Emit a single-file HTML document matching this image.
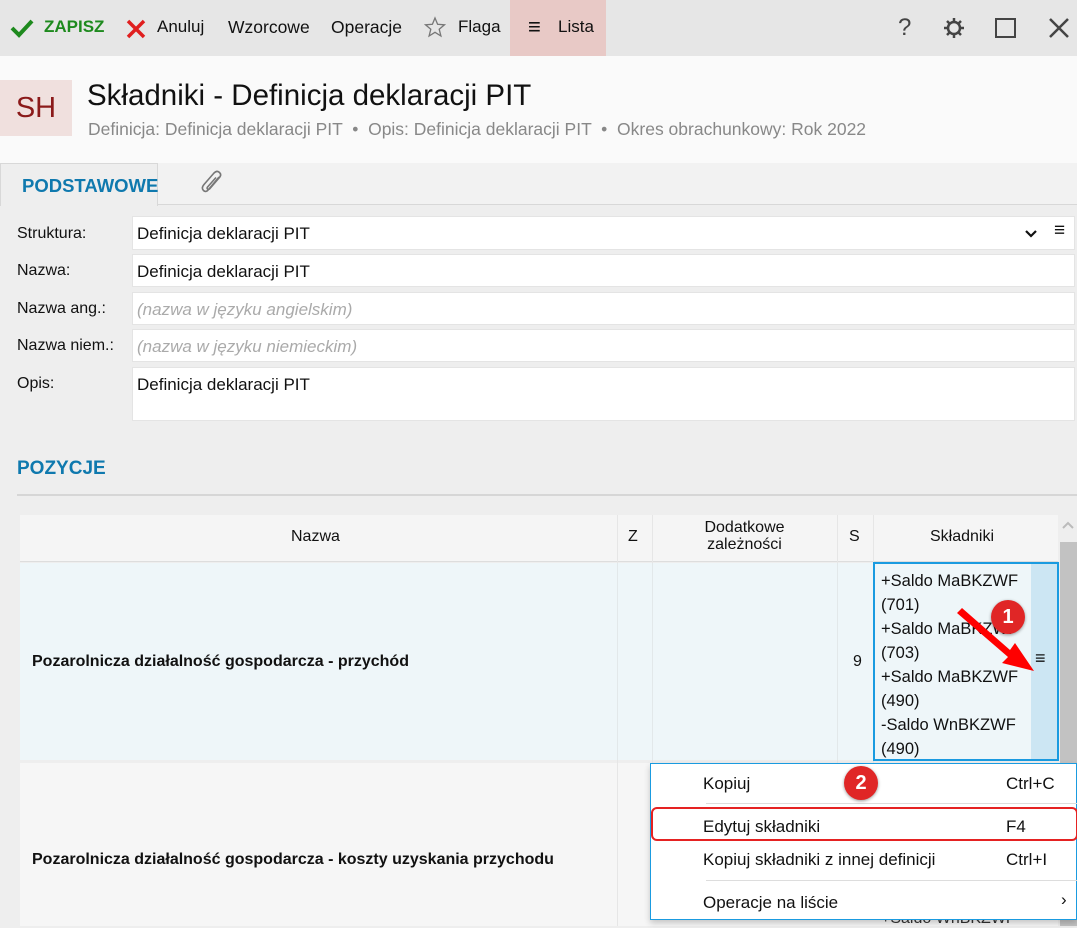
<!DOCTYPE html>
<html><head><meta charset="utf-8"><style>
*{box-sizing:border-box;margin:0;padding:0}
body{width:1077px;height:926px;overflow:hidden;background:#eeeeee;font-family:"Liberation Sans",sans-serif;color:#111;position:relative}
.a{position:absolute;white-space:nowrap}
.tb{left:0;top:0;width:1077px;height:56px;background:#e6e6e6}
.tt{font-size:17px;top:17px}
.inp{position:absolute;left:132px;width:943px;background:#fff;border:1px solid #e4e4e4;font-size:17px;padding:7px 0 0 4px}
.lbl{position:absolute;left:17px;font-size:16px}
.ph{color:#aaa;font-style:italic}
.menu .a{font-size:17px}
.bd{position:absolute;width:34px;height:34px;border-radius:50%;background:#e02626;color:#fff;font-size:20px;font-weight:bold;text-align:center;line-height:34px;box-shadow:0 1px 3px rgba(0,0,0,.4)}
</style></head><body>
<div class="a tb"></div>
<div class="a" style="left:510px;top:0;width:96px;height:56px;background:#e8c9c6"></div>
<svg class="a" style="left:10px;top:18px" width="24" height="20"><path d="M2 10 L9 17 L22 3" stroke="#1e8a1e" stroke-width="4" fill="none"/></svg>
<div class="a tt" style="left:44px;color:#1e8a1e;font-weight:bold">ZAPISZ</div>
<svg class="a" style="left:126px;top:19px" width="20" height="20"><path d="M2 2L18 18M18 2L2 18" stroke="#e01f1f" stroke-width="3.5"/></svg>
<div class="a tt" style="left:157px">Anuluj</div>
<div class="a tt" style="left:228px;font-size:17.5px">Wzorcowe</div>
<div class="a tt" style="left:331px;font-size:17.5px">Operacje</div>
<svg class="a" style="left:424px;top:16px" width="22" height="22"><path d="M11 2L13.6 8.3 20.5 8.8 15.2 13.2 16.9 20 11 16.3 5.1 20 6.8 13.2 1.5 8.8 8.4 8.3Z" stroke="#777" stroke-width="1.3" fill="none"/></svg>
<div class="a tt" style="left:458px">Flaga</div>
<div class="a" style="left:528px;top:14px;font-size:22px">≡</div>
<div class="a tt" style="left:558px">Lista</div>
<div class="a" style="left:898px;top:14px;font-size:24px;color:#444">?</div>
<svg class="a" style="left:943px;top:17px" width="22" height="22" viewBox="0 0 22 22"><circle cx="11" cy="11" r="6" stroke="#444" stroke-width="2.5" fill="none"/><path d="M11 1v5M11 16v5M1 11h5M16 11h5M4 4l3.5 3.5M14.5 14.5L18 18M18 4l-3.5 3.5M4 18l3.5-3.5" stroke="#444" stroke-width="2.5"/></svg>
<div class="a" style="left:995px;top:18px;width:21px;height:20px;border:2.5px solid #444"></div>
<svg class="a" style="left:1048px;top:17px" width="22" height="22"><path d="M2 2L20 20M20 2L2 20" stroke="#444" stroke-width="2.5"/></svg>

<div class="a" style="left:0;top:56px;width:1077px;height:107px;background:#fafafa"></div>
<div class="a" style="left:0;top:80px;width:72px;height:56px;background:#f0e0de;color:#8b1a1a;font-size:29px;text-align:center;line-height:56px">SH</div>
<div class="a" style="left:87px;top:79px;font-size:29.5px">Składniki - Definicja deklaracji PIT</div>
<div class="a" style="left:88px;top:119px;font-size:17.5px;color:#888">Definicja: Definicja deklaracji PIT &nbsp;•&nbsp; Opis: Definicja deklaracji PIT &nbsp;•&nbsp; Okres obrachunkowy: Rok 2022</div>

<div class="a" style="left:0;top:163px;width:1077px;height:42px;background:#f2f2f2;border-bottom:1px solid #d8d8d8"></div>
<div class="a" style="left:0;top:163px;width:158px;height:43px;background:#eeeeee;border:1px solid #d8d8d8;border-bottom:none"></div>
<div class="a" style="left:22px;top:175px;font-size:18.5px;font-weight:bold;color:#0f79ae">PODSTAWOWE</div>
<svg class="a" style="left:199px;top:169px" width="28" height="28" viewBox="0 0 28 28"><path d="M20 8 L10 20 Q7 24 4.5 21.5 Q2 19 5 15.5 L15 4 Q18 1 20.5 3.5 Q23 6 20 9 L11 19.5 Q9.5 21 8.5 20 Q7.5 19 9 17.5 L17 8.5" stroke="#777" stroke-width="1.6" fill="none"/></svg>

<div class="lbl" style="top:225px">Struktura:</div>
<div class="inp" style="top:216px;height:34px">Definicja deklaracji PIT</div>
<svg class="a" style="left:1024px;top:229px" width="14" height="10"><path d="M2 2L7 7 12 2" stroke="#111" stroke-width="2.2" fill="none"/></svg>
<div class="a" style="left:1054px;top:220px;font-size:19px">≡</div>
<div class="lbl" style="top:262px">Nazwa:</div>
<div class="inp" style="top:254px;height:33px">Definicja deklaracji PIT</div>
<div class="lbl" style="top:300px">Nazwa ang.:</div>
<div class="inp ph" style="top:292px;height:33px">(nazwa w języku angielskim)</div>
<div class="lbl" style="top:337px">Nazwa niem.:</div>
<div class="inp ph" style="top:329px;height:33px">(nazwa w języku niemieckim)</div>
<div class="lbl" style="top:375px">Opis:</div>
<div class="inp" style="top:367px;height:54px">Definicja deklaracji PIT</div>

<div class="a" style="left:17px;top:458px;font-size:19px;font-weight:bold;color:#0f79ae">POZYCJE</div>
<div class="a" style="left:17px;top:494px;width:1060px;height:2px;background:#d6d6d6"></div>

<div class="a" style="left:20px;top:515px;width:1038px;height:47px;background:#f5f5f5;border-bottom:1px solid #ddd"></div>
<div class="a" style="left:617px;top:515px;width:1px;height:411px;background:#e6e6e6"></div>
<div class="a" style="left:652px;top:515px;width:1px;height:411px;background:#e6e6e6"></div>
<div class="a" style="left:837px;top:515px;width:1px;height:411px;background:#e6e6e6"></div>
<div class="a" style="left:873px;top:515px;width:1px;height:411px;background:#e6e6e6"></div>
<div class="a" style="left:291px;top:528px;font-size:16px">Nazwa</div>
<div class="a" style="left:628px;top:528px;font-size:16px">Z</div>
<div class="a" style="left:652px;top:519px;width:185px;font-size:16px;text-align:center;line-height:17px;white-space:normal">Dodatkowe<br>zależności</div>
<div class="a" style="left:849px;top:528px;font-size:16px">S</div>
<div class="a" style="left:930px;top:528px;font-size:16px">Składniki</div>
<div class="a" style="left:1058px;top:515px;width:19px;height:411px;background:#eeeeee"></div>
<div class="a" style="left:1060px;top:542px;width:17px;height:384px;background:#c2c2c2"></div>
<svg class="a" style="left:1061px;top:520px" width="14" height="10"><path d="M2 8L7 3 12 8" stroke="#bbb" stroke-width="2" fill="none"/></svg>

<div class="a" style="left:20px;top:563px;width:1038px;height:197px;background:#eef6f9"></div>
<div class="a" style="left:617px;top:563px;width:1px;height:197px;background:#e2e8ea"></div>
<div class="a" style="left:652px;top:563px;width:1px;height:197px;background:#e2e8ea"></div>
<div class="a" style="left:837px;top:563px;width:1px;height:197px;background:#e2e8ea"></div>
<div class="a" style="left:32px;top:653px;font-size:16px;font-weight:bold">Pozarolnicza działalność gospodarcza - przychód</div>
<div class="a" style="left:853px;top:653px;font-size:16px">9</div>
<div class="a" style="left:873px;top:562px;width:186px;height:199px;border:2px solid #1a9be0;background:#eef6f9"></div>
<div class="a" style="left:1031px;top:564px;width:26px;height:195px;background:#cce6f3"></div>
<div class="a" style="left:1035px;top:648px;font-size:18px">≡</div>
<div class="a" style="left:881px;top:569px;font-size:16.5px;line-height:24px;white-space:normal;width:150px">+Saldo MaBKZWF<br>(701)<br>+Saldo MaBKZWF<br>(703)<br>+Saldo MaBKZWF<br>(490)<br>-Saldo WnBKZWF<br>(490)</div>

<div class="a" style="left:20px;top:763px;width:1038px;height:163px;background:#f6f6f6"></div>
<div class="a" style="left:617px;top:763px;width:1px;height:163px;background:#e6e6e6"></div>
<div class="a" style="left:32px;top:851px;font-size:16px;font-weight:bold">Pozarolnicza działalność gospodarcza - koszty uzyskania przychodu</div>
<div class="a" style="left:881px;top:910px;font-size:16px;color:#333">+Saldo WnBKZWF</div>

<svg class="a" style="left:950px;top:600px" width="90" height="80"><path d="M7 13 L12 8 L60 50 L65 43 L84 71 L52 63 L58 57 Z" fill="#f00"/></svg>
<div class="bd" style="left:991px;top:600px">1</div>

<div class="a menu" style="left:650px;top:763px;width:427px;height:157px;background:#fff;border:1px solid #1a9be0;box-shadow:0 3px 6px rgba(0,0,0,.2)">
<div class="a" style="left:52px;top:10px">Kopiuj</div><div class="a" style="left:355px;top:10px">Ctrl+C</div>
<div class="a" style="left:55px;top:39px;width:372px;height:1px;background:#ddd"></div>
<div class="a" style="left:0;top:43px;width:427px;height:34px;border:2px solid #e52222;border-radius:6px"></div>
<div class="a" style="left:52px;top:53px">Edytuj składniki</div><div class="a" style="left:355px;top:53px">F4</div>
<div class="a" style="left:52px;top:86px">Kopiuj składniki z innej definicji</div><div class="a" style="left:355px;top:86px">Ctrl+I</div>
<div class="a" style="left:55px;top:116px;width:372px;height:1px;background:#ddd"></div>
<div class="a" style="left:52px;top:129px">Operacje na liście</div><div class="a" style="left:410px;top:126px">›</div>
</div>
<div class="bd" style="left:844px;top:766px">2</div>
</body></html>
